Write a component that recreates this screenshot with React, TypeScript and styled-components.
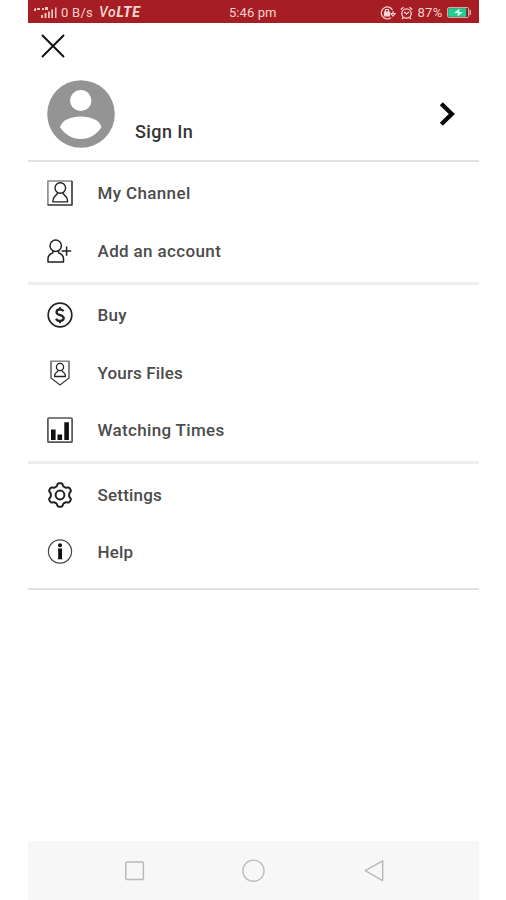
import React from "react";
import styled, { createGlobalStyle } from "styled-components";

const GlobalStyle = createGlobalStyle`
  * { box-sizing: border-box; }
  body { margin: 0; background: #fff; font-family: Roboto, "Liberation Sans", sans-serif; }
  svg { display: block; flex: none; }
`;

const Screen = styled.div`
  width: 450.5px;
  height: 900px;
  margin-left: 28px;
  display: flex;
  flex-direction: column;
  background: #fff;
`;

const StatusBar = styled.header`
  height: 23px;
  flex: none;
  display: grid;
  grid-template-columns: 1fr auto 1fr;
  align-items: center;
  padding: 2px 7px 0 6px;
  background: #a61e23;
  color: #f6d3d0;
  font-size: 13px;
`;

const StatusGroup = styled.div<{ $end?: boolean; $gap: number }>`
  display: flex;
  align-items: center;
  justify-content: ${(p) => (p.$end ? "flex-end" : "flex-start")};
  gap: ${(p) => p.$gap}px;
  white-space: nowrap;
`;

const StatusText = styled.span<{ $spacing?: number }>`
  letter-spacing: ${(p) => p.$spacing ?? 0}px;
  line-height: 21px;
`;

const Volte = styled.span`
  font-style: italic;
  font-weight: 500;
  margin-left: 2px;
  font-size: 14px;
  letter-spacing: 0.7px;
  line-height: 21px;
  b { font-weight: 800; }
`;

const CloseRow = styled.div`
  height: 45px;
  flex: none;
  display: flex;
  align-items: center;
  padding-left: 13px;
`;

const IconButton = styled.button`
  border: 0;
  padding: 0;
  background: none;
  display: flex;
`;

const Profile = styled.section`
  height: 92px;
  flex: none;
  display: flex;
  align-items: center;
  padding: 0 23px 0 19px;
`;

const SignIn = styled.span`
  flex: 1;
  margin: 35px 0 0 20px;
  font-size: 18px;
  font-weight: 500;
  line-height: 22px;
  letter-spacing: 0.4px;
  color: #353535;
`;

const Divider = styled.hr<{ $size: number; $color: string }>`
  width: 100%;
  height: ${(p) => p.$size}px;
  flex: none;
  margin: 0;
  border: 0;
  background: ${(p) => p.$color};
`;

const Section = styled.nav<{ $top: number; $bottom: number }>`
  flex: none;
  padding: ${(p) => p.$top}px 0 ${(p) => p.$bottom}px 18px;
`;

const Item = styled.div`
  height: 57.5px;
  display: flex;
  align-items: center;
  gap: 23.5px;
`;

const IconSlot = styled.span`
  width: 28px;
  height: 28px;
  display: grid;
  place-items: center;
`;

const Label = styled.span<{ $spacing: number }>`
  font-size: 17px;
  font-weight: 500;
  line-height: 22px;
  letter-spacing: ${(p) => p.$spacing}px;
  color: #4c4c4c;
`;

const NavBar = styled.footer`
  height: 59.5px;
  flex: none;
  margin-top: auto;
  display: flex;
  align-items: center;
  justify-content: space-between;
  padding: 1px 94px 0 96px;
  background: #f7f7f7;
  border-radius: 2px 2px 0 0;
`;

const Stroke = ({ w = 1.4, children }: { w?: number; children: React.ReactNode }) => (
  <svg width="28" height="28" viewBox="0 0 28 28" fill="none" stroke="#222" strokeWidth={w} strokeLinejoin="round">
    {children}
  </svg>
);

const ChannelIcon = () => (
  <Stroke w={1.4}>
    <path d="M1.900 26V2H26" stroke="#888" strokeWidth="1.600" />
    <path d="M26 2v24H1.600" stroke="#333" strokeWidth="1.600" />
    <ellipse cx="14.300" cy="9" rx="5.300" ry="5.200" />
    <path d="M11.700 13.600c0 3.100-4.700 2.600-4.700 7.600v1.700h14.500v-1.700c0-5-4.700-4.500-4.700-7.600" />
  </Stroke>
);

const AddIcon = () => (
  <Stroke w={1.5}>
    <ellipse cx="9.700" cy="8.800" rx="5.700" ry="5.700" />
    <path d="M6.800 13.900v1.800C3.500 17.200 2 18.700 2 21.200v3.700h15.500v-3.700c0-2.500-1.500-4-4.800-5.500v-1.800M20.600 9.500v9.200M15.500 14H25.200" />
  </Stroke>
);

const BuyIcon = () => (
  <Stroke w={1.7}>
    <circle cx="14" cy="14" r="11.800" />
    <path d="M17.500 10.300c-.7-1.300-2-1.900-3.500-1.900-2.200 0-3.500 1.200-3.500 2.800 0 3.700 7.200 2 7.200 5.800 0 1.700-1.500 2.900-3.700 2.900-1.800 0-3.200-.7-3.900-2.200" strokeWidth="2.300" />
    <path d="M14 6.200v3M14 19.300v3" strokeWidth="2" />
  </Stroke>
);

const FilesIcon = () => (
  <Stroke w={1.3}>
    <path d="M5 2v17l9 7 9-7V2" stroke="#444" />
    <path d="M4.400 2.200h19.200" stroke="#888" strokeWidth="1.500" />
    <circle cx="14" cy="8" r="3.600" />
    <path d="M12.200 11.200c0 2.300-3.600 2-3.600 5.300v1h10.800v-1c0-3.300-3.600-3-3.600-5.300" />
  </Stroke>
);

const ChartIcon = () => (
  <Stroke>
    <rect x="1.900" y="2" width="24.200" height="24.200" rx="1" stroke="#555" strokeWidth="1.700" />
    <path d="M5 13.500h4.600V24H5zM11.500 18.500h4.600V24h-4.600zM18.300 6.300h4.600V24h-4.600z" fill="#111" stroke="none" />
  </Stroke>
);

const gearOutline = Array.from({ length: 120 }, (_, i) => {
  const angle = (i / 120) * Math.PI * 2;
  const radius = 10.500 + 1.350 * Math.tanh(2 * Math.cos(6 * angle));
  return `${(14 + radius * Math.sin(angle)).toFixed(2)},${(14 - radius * Math.cos(angle)).toFixed(2)}`;
}).join(" ");

const GearIcon = () => (
  <Stroke w={2}>
    <polygon points={gearOutline} />
    <circle cx="14" cy="14" r="4.400" />
  </Stroke>
);

const HelpIcon = () => (
  <Stroke w={1.200}>
    <circle cx="14" cy="13.500" r="11.600" stroke="#444" />
    <circle cx="14" cy="7.300" r="2" fill="#111" stroke="none" />
    <path d="M11.500 10.500h4.500v9.800l.9.900H11.500l.7-.9v-8.700z" fill="#111" stroke="none" />
  </Stroke>
);

type Entry = { label: string; icon: React.ReactNode; spacing: number };
type Group = { top: number; bottom: number; size: number; color: string; items: Entry[] };

const groups: Group[] = [
  {
    top: 2.5, bottom: 2.5, size: 3, color: "#eeeeee",
    items: [
      { label: "My Channel", icon: <ChannelIcon />, spacing: 0.36 },
      { label: "Add an account", icon: <AddIcon />, spacing: 0.36 },
    ],
  },
  {
    top: 1.5, bottom: 2, size: 3, color: "#eeeeee",
    items: [
      { label: "Buy", icon: <BuyIcon />, spacing: 0.3 },
      { label: "Yours Files", icon: <FilesIcon />, spacing: 0.15 },
      { label: "Watching Times", icon: <ChartIcon />, spacing: 0.33 },
    ],
  },
  {
    top: 1.75, bottom: 7.25, size: 2, color: "#e1e1e1",
    items: [
      { label: "Settings", icon: <GearIcon />, spacing: 0.2 },
      { label: "Help", icon: <HelpIcon />, spacing: 0.2 },
    ],
  },
];

export default function App() {
  return (
    <>
      <GlobalStyle />
      <Screen>
        <StatusBar>
          <StatusGroup $gap={4}>
            <svg width="23" height="12" viewBox="0 0 23 12" fill="#f1c4c1">
              <path d="M0 2l2-1.500V4H0zM3 1h3v2H3zM8 1h2v2H8zM11 0h3v3h-3zM7 8h2v3H7zM10.500 6h2v5h-2zM14 4.500h1.800V11H14zM17.300 2.500H19V11h-1.700zM21 .5h1.500V11H21z" />
            </svg>
            <StatusText $spacing={0.25}>0 B/s</StatusText>
            <Volte>Vo<b>LTE</b></Volte>
          </StatusGroup>
          <StatusText $spacing={0.1}>5:46 pm</StatusText>
          <StatusGroup $end $gap={4}>
            <svg width="16" height="14" viewBox="0 0 16 14" fill="none" stroke="#f6d3d0" strokeWidth="1.200">
              <path d="M12.500 4A6 6 0 1 0 11 11.700M13 5v3M11 7.500h4L13 10z" />
              <path d="M4.500 6h5v4h-5z" fill="#f6d3d0" />
              <path d="M5.500 6V3.500h3V6" />
            </svg>
            <svg width="13" height="14" viewBox="0 0 13 14" fill="none" stroke="#f6d3d0" strokeWidth="1.300">
              <circle cx="6.500" cy="7.500" r="4.700" />
              <path d="M.8 3.500L3.500 1.200M12.200 3.500L9.500 1.200M4 6l2.500 2L9 6M3.300 11.500L2 13M9.700 11.500L11 13" />
            </svg>
            <StatusText $spacing={0.3}>87%</StatusText>
            <svg width="25" height="12" viewBox="0 0 25 12">
              <rect x=".6" y=".6" width="21" height="9.800" rx="1" fill="#7d1b20" stroke="#e7b5ac" strokeWidth="1" />
              <path d="M1.200 1.200h18v8.600h-18z" fill="#20ce91" />
              <path d="M22.500 3h1.500v5h-1.500z" fill="#dda9a4" />
              <path d="M12.500 1.500L7 6.200l4-.2-.5 3.500L16 5l-4 .1z" fill="#e9fff5" />
            </svg>
          </StatusGroup>
        </StatusBar>
        <CloseRow>
          <IconButton aria-label="Close">
            <svg width="24" height="24" viewBox="0 0 24 24" stroke="#111" strokeWidth="2">
              <path d="M1 1l22 22M23 1L1 23" />
            </svg>
          </IconButton>
        </CloseRow>
        <Profile>
          <svg width="68" height="68" viewBox="0 0 68 68">
            <circle cx="34" cy="34" r="33.800" fill="#949494" />
            <circle cx="33.800" cy="20.500" r="10.600" fill="#fff" />
            <path d="M13 47c2-7 11-10.500 20.800-10.500S52.600 40 54.500 47C50 54.500 42.500 59 33.800 59S17.500 54.500 13 47z" fill="#fff" />
          </svg>
          <SignIn>Sign In</SignIn>
          <svg width="17" height="26" viewBox="0 0 17 26" fill="none" stroke="#050505" strokeWidth="4.300">
            <path d="M2.300 2.800L12.800 13 2.300 23.200" />
          </svg>
        </Profile>
        <Divider $size={2} $color="#e1e1e1" />
        {groups.map((g) => (
          <React.Fragment key={g.top}>
            <Section $top={g.top} $bottom={g.bottom}>
              {g.items.map((it) => (
                <Item key={it.label}>
                  <IconSlot>{it.icon}</IconSlot>
                  <Label $spacing={it.spacing}>{it.label}</Label>
                </Item>
              ))}
            </Section>
            <Divider $size={g.size} $color={g.color} />
          </React.Fragment>
        ))}
        <NavBar>
          <svg width="21" height="20" viewBox="0 0 21 20" fill="none" stroke="#b9b9b9" strokeWidth="1.500">
            <rect x="1.800" y="1" width="17.600" height="17.600" rx="1" />
          </svg>
          <svg width="24" height="24" viewBox="0 0 24 24" fill="none" stroke="#bdbdbd" strokeWidth="1.400">
            <circle cx="11.500" cy="11.700" r="10.600" />
          </svg>
          <svg width="21" height="22" viewBox="0 0 21 22" fill="none" stroke="#b9b9b9" strokeWidth="1.400" strokeLinejoin="round">
            <path d="M1.200 10.700L18.700.8v19.800z" />
          </svg>
        </NavBar>
      </Screen>
    </>
  );
}
